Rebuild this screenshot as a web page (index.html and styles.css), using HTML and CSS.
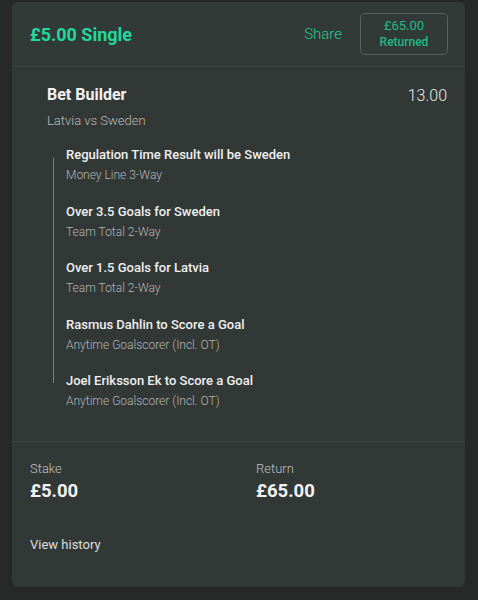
FILE: index.html
```html
<!DOCTYPE html>
<html lang="en">
<head>
  <meta charset="UTF-8">
  <meta name="viewport" content="width=device-width, initial-scale=1.0">
  <title>Bet Details</title>
  <link rel="stylesheet" href="styles.css">
</head>
<body>
  <div class="bet-card">
    <div class="bet-header">
      <h1 class="bet-title">£5.00 Single</h1>
      <span class="share">Share</span>
      <div class="returned">
        <span class="returned-amount">£65.00</span>
        <span class="returned-label">Returned</span>
      </div>
    </div>

    <div class="bet-body">
      <div class="builder-row">
        <h2 class="builder-title">Bet Builder</h2>
        <span class="odds">13.00</span>
      </div>
      <div class="event">Latvia vs Sweden</div>

      <ul class="legs">
        <li class="leg">
          <div class="leg-title">Regulation Time Result will be Sweden</div>
          <div class="leg-market">Money Line 3-Way</div>
        </li>
        <li class="leg">
          <div class="leg-title">Over 3.5 Goals for Sweden</div>
          <div class="leg-market">Team Total 2-Way</div>
        </li>
        <li class="leg">
          <div class="leg-title">Over 1.5 Goals for Latvia</div>
          <div class="leg-market">Team Total 2-Way</div>
        </li>
        <li class="leg">
          <div class="leg-title">Rasmus Dahlin to Score a Goal</div>
          <div class="leg-market">Anytime Goalscorer (Incl. OT)</div>
        </li>
        <li class="leg">
          <div class="leg-title">Joel Eriksson Ek to Score a Goal</div>
          <div class="leg-market">Anytime Goalscorer (Incl. OT)</div>
        </li>
      </ul>
    </div>

    <div class="bet-footer">
      <div class="totals">
        <div>
          <div class="total-label">Stake</div>
          <div class="total-value">£5.00</div>
        </div>
        <div>
          <div class="total-label">Return</div>
          <div class="total-value">£65.00</div>
        </div>
      </div>
      <a class="history" href="#">View history</a>
    </div>
  </div>
</body>
</html>
```

FILE: styles.css
```css
body {
  margin: 0;
  padding: 2px 13px 14px 12px;
  background-color: #272828;
  font-family: Roboto, "Liberation Sans", Arial, sans-serif;
}
.bet-card {
  background-color: #323836;
  border-radius: 6px;
  overflow: hidden;
}
.bet-header {
  display: flex;
  align-items: center;
  height: 64px;
  padding: 0 17px 0 18px;
  background-color: #313a37;
  border-bottom: 1px solid #3e4442;
}
.bet-title {
  flex: 1;
  margin: 0;
  font-size: 18px;
  font-weight: 700;
  color: #22d89c;
}
.share {
  font-size: 15px;
  font-weight: 300;
  color: #2ac891;
  margin-right: 18px;
}
.returned {
  display: flex;
  flex-direction: column;
  align-items: center;
  width: 86px;
  padding: 4px 0 3px;
  border: 1px solid #59605d;
  border-radius: 5px;
  color: #20b985;
}
.returned-amount {
  font-size: 13px;
  line-height: 16px;
}
.returned-label {
  font-size: 12px;
  font-weight: 500;
  line-height: 17px;
}
.bet-body {
  padding: 18px 18px 31px 35px;
  border-bottom: 1px solid #3e4442;
}
.builder-row {
  display: flex;
  justify-content: space-between;
}
.builder-title {
  margin: 0;
  font-size: 16px;
  font-weight: 700;
  line-height: 20px;
  color: #f2f2f2;
}
.odds {
  font-size: 16px;
  font-weight: 300;
  line-height: 22px;
  color: #e8e8e8;
}
.event {
  margin-top: 5px;
  font-size: 13px;
  font-weight: 300;
  line-height: 18px;
  color: #b8bbba;
}
.legs {
  position: relative;
  list-style: none;
  margin: 16px 0 0;
  padding: 0 0 0 19px;
  display: flex;
  flex-direction: column;
  gap: 18.5px;
}
.legs::before {
  content: "";
  position: absolute;
  left: 6px;
  top: 12px;
  bottom: 27px;
  width: 1px;
  background-color: #7c817f;
}
.leg-title {
  font-size: 13px;
  font-weight: 500;
  line-height: 18px;
  color: #f0f0f0;
}
.leg-market {
  margin-top: 2px;
  font-size: 12px;
  font-weight: 300;
  line-height: 18px;
  color: #b3b6b5;
}
.bet-footer {
  padding: 18px 18px 33px;
}
.totals {
  display: grid;
  grid-template-columns: 226px 1fr;
}
.total-label {
  font-size: 13px;
  font-weight: 300;
  line-height: 18px;
  color: #bfc2c1;
}
.total-value {
  margin-top: 1px;
  font-size: 18.5px;
  font-weight: 700;
  line-height: 24px;
  color: #f2f2f2;
}
.history {
  display: block;
  margin-top: 33px;
  font-size: 13px;
  line-height: 18px;
  color: #dedede;
  text-decoration: none;
}
```
